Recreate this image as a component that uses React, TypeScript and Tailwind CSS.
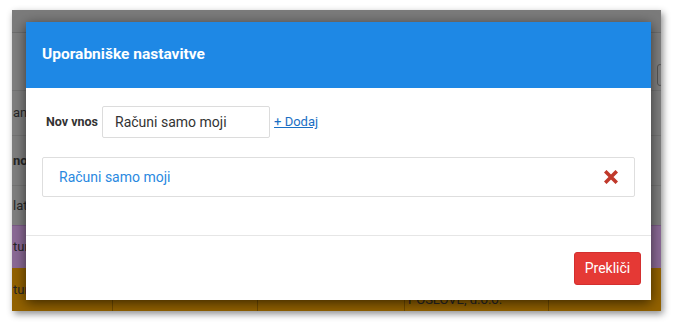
import { useState } from 'react';

const font = { fontFamily: 'Roboto, "Noto Sans", sans-serif' };

function CloseIcon() {
  return (
    <svg width="14" height="14" viewBox="0 0 14 14" className="block">
      <path d="M2.5 2.5 L11.5 11.5 M11.5 2.5 L2.5 11.5" stroke="#c0392b" strokeWidth="3.6" strokeLinecap="square" />
    </svg>
  );
}

// dimmed app behind the dialog
function Backdrop() {
  return (
    <div className="flex flex-col h-full text-[13px] text-[#262626]">
      <div className="h-[23px] bg-[#7b7b7b] border-b border-[#6d6d6d] shrink-0" />
      <div className="h-[57px] bg-[#7f7f7f] shrink-0 flex justify-end items-end pb-[4px]">
        <div className="w-[6px] h-[22px] border border-[#555] rounded-[3px] mr-[-2px]" />
      </div>
      <div className="h-[45px] bg-[#7f7f7f] border-t border-[#747474] flex items-center pl-[1px]">an</div>
      <div className="h-[50px] bg-[#7f7f7f] border-t border-[#747474] flex items-center pl-[1px] font-bold">no</div>
      <div className="h-[40px] bg-[#7f7f7f] border-t border-[#747474] flex items-center pl-[1px]">lat</div>
      <div className="h-[43px] bg-[#8b6a96] border-t border-[#7a5b85] flex items-center pl-[1px]">tur</div>
      <div className="flex-1 bg-[#936200] flex">
        <div className="w-[101px] flex items-center pl-[1px] border-r border-[#6e4a00]">tur</div>
        <div className="w-[145px] border-r border-[#6e4a00]" />
        <div className="w-[147px] border-r border-[#6e4a00]" />
        <div className="w-[144px] border-r border-[#6e4a00] flex items-end pl-[3px] pb-[2px]">POSLOVE, d.o.o.</div>
        <div className="flex-1" />
      </div>
    </div>
  );
}

export default function App() {
  const [value, setValue] = useState('Računi samo moji');
  const [items] = useState(['Računi samo moji']);

  return (
    <div className="w-[674px] h-[322px] bg-white pl-[12px] pt-[10px]" style={font}>
      <div className="relative w-[649px] h-[301px] overflow-hidden shadow-[2px_3px_7px_rgba(0,0,0,0.45)]">
        <Backdrop />

        <div className="absolute left-[14px] top-[12px] w-[625px] h-[278px] bg-white flex flex-col shadow-[0_3px_12px_rgba(0,0,0,0.6)]">
          <div className="h-[66px] bg-[#1e88e5] flex items-center px-4 shrink-0">
            <h2 className="text-white text-[15.5px] font-bold">Uporabniške nastavitve</h2>
          </div>

          <div className="h-[148px] px-4 pt-[18px] border-b border-[#e6e6e6] shrink-0">
            <div className="flex items-center pl-[4px]">
              <span className="text-[12.5px] font-bold text-[#333] mr-[4px]">Nov vnos</span>
              <input
                value={value}
                onChange={(e) => setValue(e.target.value)}
                className="w-[168px] h-[32px] border border-[#dcdcdc] rounded-[2px] px-[12px] text-[14px] text-[#333] outline-none"
                style={font}
              />
              <a href="#" className="ml-[4px] text-[13px] text-[#1a6fc4] underline">+ Dodaj</a>
            </div>

            <div className="mt-[19px] flex flex-col">
              {items.map((item) => (
                <div key={item} className="h-[40px] border border-[#dedede] rounded-[2px] flex items-center justify-between pl-[16px] pr-[16px]">
                  <span className="text-[14px] text-[#2a89df]">{item}</span>
                  <CloseIcon />
                </div>
              ))}
            </div>
          </div>

          <div className="flex-1 flex justify-end items-start pt-[16px] pr-[10px]">
            <button className="w-[67px] h-[33px] bg-[#e53935] text-white text-[14px] rounded-[3px] border border-[#d32f2f]">
              Prekliči
            </button>
          </div>
        </div>
      </div>
    </div>
  );
}
